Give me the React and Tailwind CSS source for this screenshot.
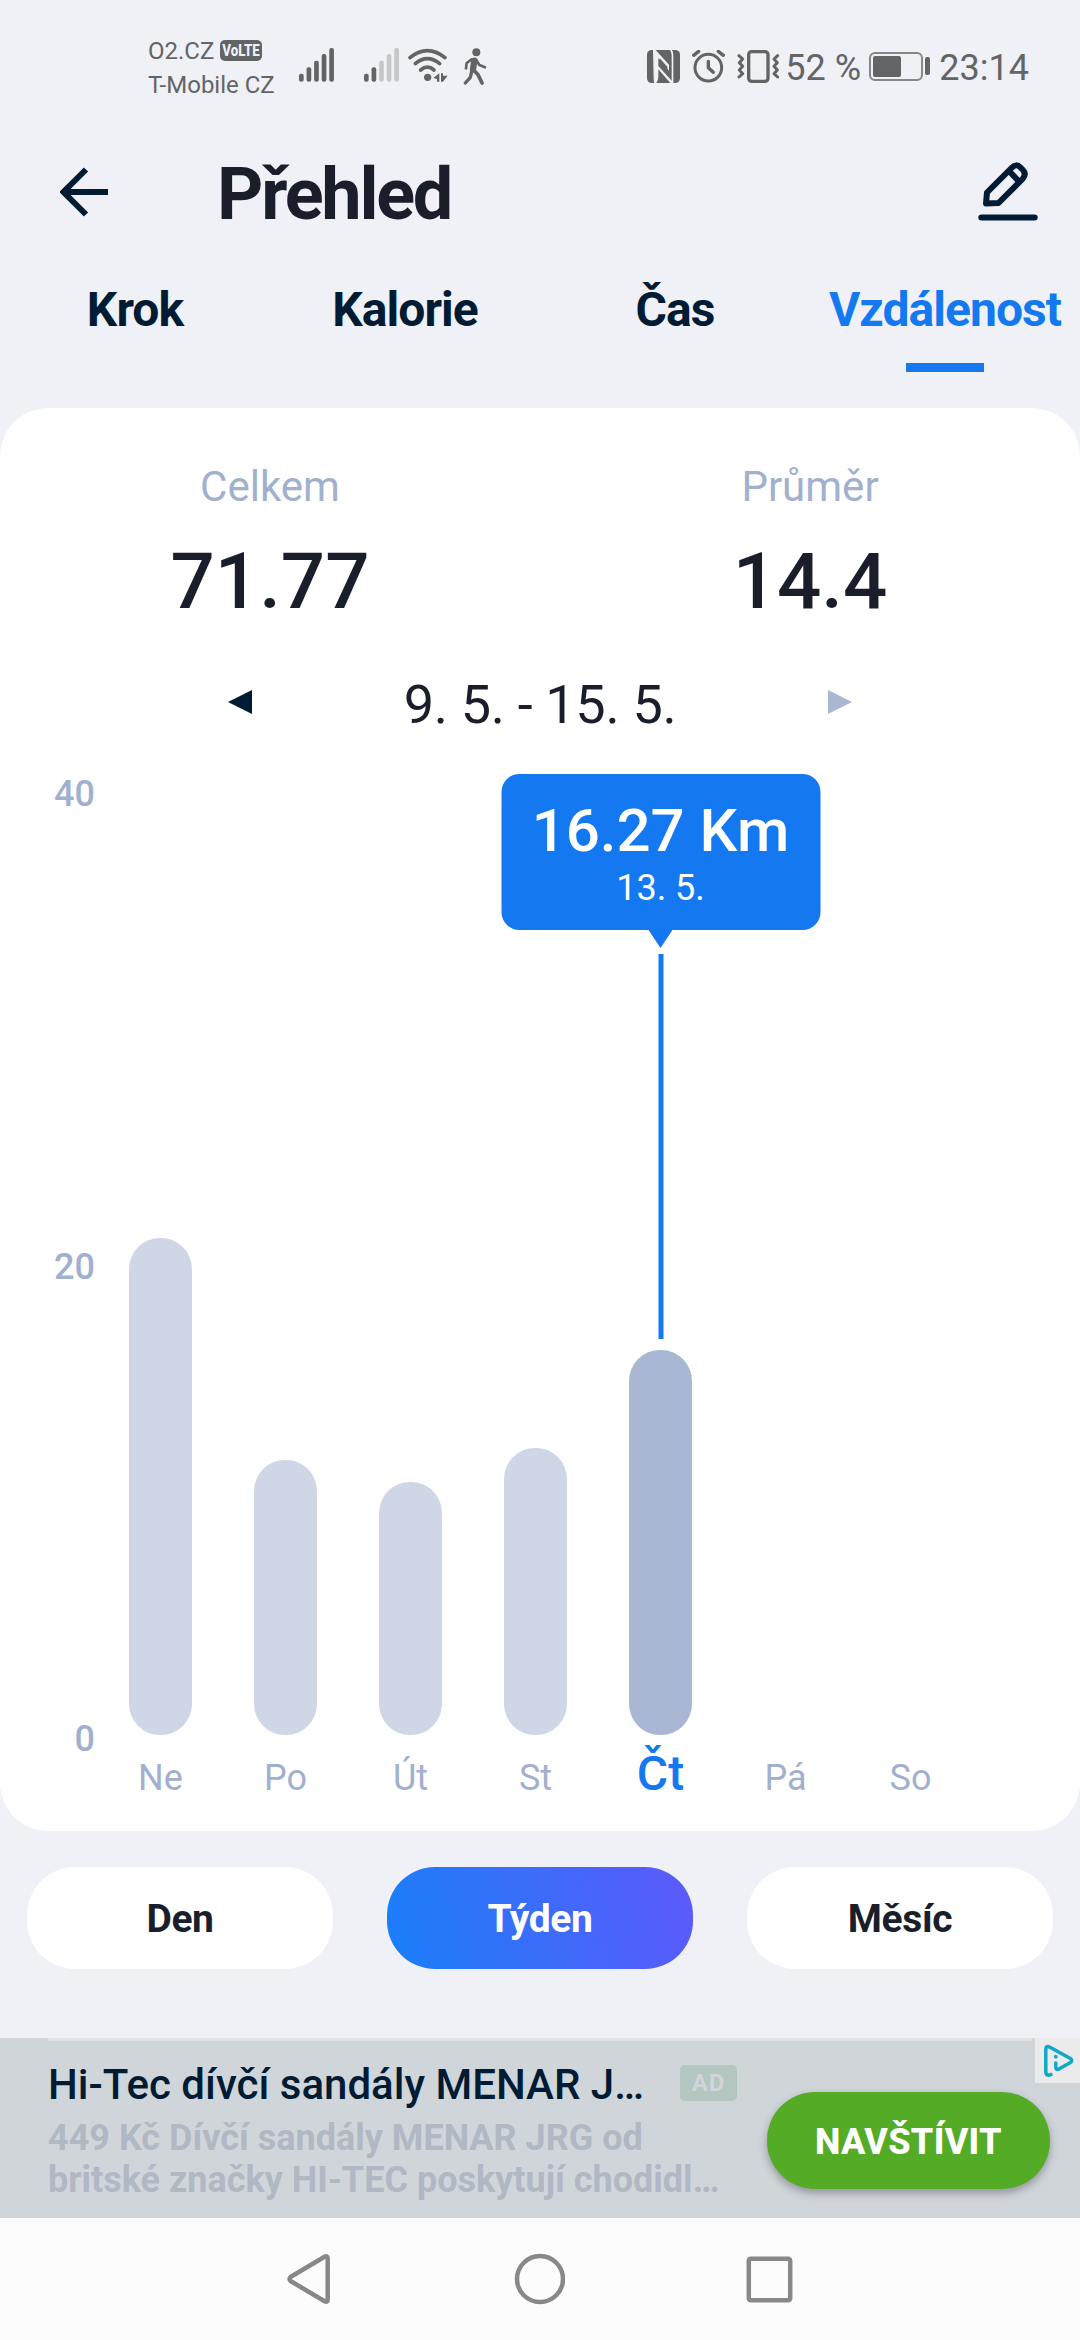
import { useState } from 'react';

const TABS = ['Krok', 'Kalorie', 'Čas', 'Vzdálenost'];

const PERIODS = ['Den', 'Týden', 'Měsíc'];

// Bar heights are in px, the scale is 472px per 20 km
const DAYS = [
  { label: 'Ne', height: 497 },
  { label: 'Po', height: 275 },
  { label: 'Út', height: 253 },
  { label: 'St', height: 287 },
  { label: 'Čt', height: 385, value: '16.27 Km', date: '13. 5.' },
  { label: 'Pá', height: 0 },
  { label: 'So', height: 0 },
];

const SignalIcon = ({ strength }) => {
  const tops = [163, 144, 124, 104, 86];
  return (
    <svg className="w-[35px] h-[34px]" viewBox="537 86 105 102">
      {tops.map((top, i) => (
        <rect
          key={top}
          x={537 + i * 22.7}
          y={top}
          width="14"
          height={187 - top}
          rx="6"
          fill={i < strength ? '#636466' : '#c6c7cb'}
        />
      ))}
    </svg>
  );
};

const WifiIcon = () => (
  <svg className="w-10 h-[34px]" viewBox="866 86 120 102" fill="none" stroke="#636466" strokeWidth="11" strokeLinecap="round">
    <path d="M872 115Q924 73 977 115" />
    <path d="M888 133Q924 103 961 133" />
    <path d="M904 152Q924 135 944 152" />
    <circle cx="925" cy="174" r="11" fill="#636466" stroke="none" />
    <path d="M942 176L960 162V187H953V179ZM965 162H971V169H985L971 187H965Z" fill="#636466" stroke="none" />
  </svg>
);

const WalkIcon = () => (
  <svg className="w-[24px] h-[37px]" viewBox="1030 82 72 111" fill="none" stroke="#636466" strokeLinecap="round" strokeLinejoin="round">
    <circle cx="1070" cy="95" r="12" fill="#636466" stroke="none" />
    <path d="M1064 120L1060 146" strokeWidth="19" />
    <path d="M1056 116L1041 127L1039 143" strokeWidth="8" />
    <path d="M1070 118L1079 133L1096 140" strokeWidth="8" />
    <path d="M1056 152L1052 170L1037 187" strokeWidth="10" />
    <path d="M1062 148L1075 162L1087 187" strokeWidth="11" />
  </svg>
);

const NfcIcon = () => (
  <svg className="w-[33px] h-[33px]" viewBox="78 90 99 99">
    <rect x="78" y="90" width="99" height="99" rx="14" fill="#636466" />
    <path
      d="M96 90L104 90L144 134V152L112 114V170Q112 182 106 189H100Q98 184 98 176ZM112 138L152 182V104Q151 96 147 90H153Q157 96 157 104V189H148L112 148Z"
      fill="#f0f1f6"
    />
    <path d="M116 124L139 150V140L116 115Z" fill="#636466" />
  </svg>
);

const AlarmIcon = () => (
  <svg className="w-[33px] h-[33px]" viewBox="213 90 99 99" fill="none" stroke="#636466" strokeWidth="9" strokeLinecap="round" strokeLinejoin="round">
    <circle cx="262" cy="143" r="40" />
    <path d="M262 124V143L277 157" strokeWidth="10" />
    <path d="M218 106L233 94M292 94L307 106" strokeWidth="10" />
  </svg>
);

const VibrateIcon = () => (
  <svg className="w-[43px] h-[33px]" viewBox="347 90 129 99" fill="none" stroke="#636466" strokeWidth="10" strokeLinejoin="round" strokeLinecap="round">
    <rect x="382" y="95" width="58" height="89" rx="9" />
    <path d="M353 107L364 117L354 128L364 139L354 150L364 161L353 171" strokeWidth="9" />
    <path d="M469 107L458 117L468 128L458 139L468 150L458 161L469 171" strokeWidth="9" />
  </svg>
);

const StatusBar = () => (
  <div className="h-[130px] flex items-start text-[#636466]">
    <div className="ml-[148px] mt-[34px] w-[151px] text-[24px] leading-[34px] whitespace-nowrap">
      <div className="flex items-center">
        <span>O2.CZ</span>
        <span className="ml-[6px] -mt-[2px] w-[42px] h-[21px] rounded-[5px] bg-[#636466] flex justify-center items-center">
          <span className="scale-x-[0.78] text-[17px] leading-[21px] font-extrabold text-[#f0f1f6]">VoLTE</span>
        </span>
      </div>
      <div>T-Mobile CZ</div>
    </div>
    <div className="mt-[48px] flex items-start">
      <SignalIcon strength={5} />
      <div className="ml-[30px] flex">
        <SignalIcon strength={2} />
      </div>
      <div className="ml-[9px] flex">
        <WifiIcon />
      </div>
      <div className="ml-[15px] flex">
        <WalkIcon />
      </div>
    </div>
    <div className="ml-auto mr-[51px] mt-[46px] h-10 flex items-center text-[36px]">
      <NfcIcon />
      <div className="ml-3 flex">
        <AlarmIcon />
      </div>
      <div className="ml-3 flex">
        <VibrateIcon />
      </div>
      <span className="ml-[5px] mt-[3px] w-[76px] leading-10 whitespace-nowrap">52 %</span>
      <div className="ml-[8px] w-[54px] h-[29px] rounded-[6px] border-2 border-[#85868a] p-[2px]">
        <div className="w-[28px] h-full rounded-[2px] bg-[#636466]" />
      </div>
      <div className="ml-[2px] w-[5px] h-[18px] rounded-[2px] bg-[#636466]" />
      <span className="ml-[9px] mt-[3px] leading-10">23:14</span>
    </div>
  </div>
);

const Header = () => (
  <header className="h-[128px] flex items-center pl-[60px] pr-[42px]">
    <svg className="w-12 h-[50px] -mt-1" viewBox="60 167 48 50" fill="none" stroke="#001b34" strokeWidth="6">
      <path d="M86 169.500L63.500 192L86 214.500M63.500 192H108" />
    </svg>
    <h1 className="ml-[109px] mt-[2px] text-[72px] leading-[84px] font-bold tracking-[-0.031em] text-[#1a1e2b]">Přehled</h1>
    <svg className="ml-auto -mt-1 w-[60px] h-[60px]" viewBox="978 162 60 60" fill="none" stroke="#001b34" strokeWidth="6" strokeLinejoin="round">
      <path d="M986 203.500L987 192.500L1011.500 168Q1016 163 1020.500 167.500L1022.500 169.500Q1027 174 1022.500 179L998.500 203Z" />
      <path d="M1009 171L1019 181.500" />
      <path d="M981.300 217.500H1034.700" strokeLinecap="round" />
    </svg>
  </header>
);

const Tooltip = ({ value, date, lineHeight }) => (
  <div className="absolute bottom-full left-1/2 -translate-x-1/2 mb-[11px] flex flex-col items-center">
    <div className="w-[319px] h-[156px] rounded-[18px] bg-[#1479f0] pt-[22px] text-center text-white whitespace-nowrap">
      <div className="text-[60px] leading-[70px] font-medium">{value}</div>
      <div className="text-[36px] leading-[44px]">{date}</div>
    </div>
    <svg className="w-6 h-[18px]" viewBox="0 0 24 18">
      <path d="M0 0H24L12 18Z" fill="#1479f0" />
    </svg>
    <div className="mt-[6px] w-[5px] bg-[#1479f0]" style={{ height: lineHeight }} />
  </div>
);

const Chart = () => {
  const selected = 4;

  return (
    <div className="mt-[39px] flex">
      {/* Y axis */}
      <div className="w-[95px] h-[981px] flex flex-col justify-between text-right text-[36px] leading-[36px] font-medium text-[#a1b0cf]">
        <span>40</span>
        <span>20</span>
        <span>0</span>
      </div>

      {/* Bars */}
      <div className="ml-[3px]">
        <div className="h-[959px] flex items-end">
          {DAYS.map((day, i) => (
            <div key={day.label} className="w-[125px] flex justify-center">
              <div
                className={`relative w-[63px] rounded-[31px] ${i === selected ? 'bg-[#a9b6d4]' : 'bg-[#cfd6e6]'}`}
                style={{ height: day.height }}
              >
                {i === selected && <Tooltip value={day.value} date={day.date} lineHeight={385} />}
              </div>
            </div>
          ))}
        </div>
        <div className="mt-[11px] flex items-baseline">
          {DAYS.map((day, i) => (
            <span
              key={day.label}
              className={`w-[125px] text-center ${
                i === selected
                  ? 'text-[48px] leading-[56px] font-medium text-[#1479f0]'
                  : 'text-[36px] leading-[40px] text-[#a1b0cf]'
              }`}
            >
              {day.label}
            </span>
          ))}
        </div>
      </div>
    </div>
  );
};

const AdBanner = () => (
  <div className="relative h-[180px] flex bg-[#d0d5da]">
    <div className="absolute top-0 left-12 w-[984px] h-[3px] bg-[#dfe3e8]" />
    <div className="w-[767px] pl-12 pt-[22px] whitespace-nowrap">
      <div className="flex items-center">
        <p className="w-[632px] text-[42px] leading-[50px] font-medium text-[#001b34]">Hi-Tec dívčí sandály MENAR J…</p>
        <span className="-mt-[4px] w-[57px] h-9 rounded-[5px] bg-[#b3c7c0] text-center text-[24px] leading-9 font-bold tracking-[0.04em] text-[#d0d5da]">
          AD
        </span>
      </div>
      <p className="mt-[7px] text-[36px] leading-[42px] font-bold text-[#b0b8c3]">
        449 Kč Dívčí sandály MENAR JRG od
        <br />
        britské značky HI-TEC poskytují chodidl…
      </p>
    </div>
    <button className="mt-[54px] w-[283px] h-[97px] rounded-[48px] bg-[#54ab26] pt-[2px] text-[36px] leading-[42px] font-extrabold tracking-[0.008em] text-white shadow-[0_4px_8px_rgba(0,0,0,0.3)]">
      NAVŠTÍVIT
    </button>
    <div className="absolute top-0 right-0 w-[45px] h-[45px] bg-[#ebebeb]">
      <svg className="w-[45px] h-[45px]" viewBox="0 0 45 45" fill="none" stroke="#10a8c6" strokeWidth="3.500" strokeLinecap="round" strokeLinejoin="round">
        <path d="M16 36.500L13.500 37.300Q10.800 37 10.800 34V11Q11 7.500 14 8.800L35.500 20.500Q38 22.500 35.500 24.500L23 31.500Q20.800 31.500 20.800 29V25" />
        <circle cx="20.800" cy="18.700" r="1.900" fill="#10a8c6" stroke="none" />
      </svg>
    </div>
  </div>
);

const NavBar = () => (
  <nav className="h-[122px] flex items-center justify-between pl-[286px] pr-[287px] bg-[#fcfcfc]">
    <svg className="w-[45px] h-[52px]" viewBox="0 0 45 52" fill="none" stroke="#888" strokeWidth="4.500" strokeLinejoin="round">
      <path d="M39 3.500Q41.700 2.500 41.700 5.500V46.500Q41.700 49.500 39 48.500L4.500 28Q2.500 26 4.500 24Z" />
    </svg>
    <svg className="w-[52px] h-[52px]" viewBox="0 0 52 52" fill="none" stroke="#888" strokeWidth="4.500">
      <circle cx="27" cy="26" r="23" />
    </svg>
    <svg className="w-[47px] h-[47px]" viewBox="0 0 47 47" fill="none" stroke="#888" strokeWidth="4.500">
      <rect x="2.800" y="2.800" width="41.400" height="41.400" rx="2" />
    </svg>
  </nav>
);

const App = () => {
  const [tab, setTab] = useState('Vzdálenost');
  const [period, setPeriod] = useState('Týden');

  return (
    <div className="w-[1080px] h-[2340px] flex flex-col overflow-hidden bg-[#f0f1f6] font-['Roboto',sans-serif]">
      <StatusBar />
      <Header />

      {/* Tabs */}
      <div className="h-[150px] grid grid-cols-4 pt-[22px]">
        {TABS.map((name) => (
          <button
            key={name}
            onClick={() => setTab(name)}
            className={`flex flex-col items-center text-[48px] leading-[60px] font-bold tracking-[-0.02em] ${
              tab === name ? 'text-[#1479f0]' : 'text-[#001b34]'
            }`}
          >
            {name}
            {tab === name && <span className="mt-[23px] w-[78px] h-[9px] bg-[#1479f0]" />}
          </button>
        ))}
      </div>

      {/* Summary card */}
      <main className="h-[1423px] rounded-[48px] bg-white pt-[54px]">
        <div className="grid grid-cols-2 text-center">
          <div>
            <p className="text-[42px] leading-[50px] text-[#a1b0cf]">Celkem</p>
            <p className="mt-6 text-[78px] leading-[92px] font-medium text-[#1a1e2b]">71.77</p>
          </div>
          <div>
            <p className="text-[42px] leading-[50px] text-[#a1b0cf]">Průměr</p>
            <p className="mt-6 text-[78px] leading-[92px] font-medium text-[#1a1e2b]">14.4</p>
          </div>
        </div>

        {/* Week selector */}
        <div className="mt-[45px] h-16 flex items-center justify-between px-[228px]">
          <svg className="w-6 h-6 -mt-[6px]" viewBox="0 0 24 24">
            <path d="M24 0V24L0 12Z" fill="#001b34" />
          </svg>
          <span className="text-[54px] leading-[64px] tracking-[-0.006em] text-[#1a1e2b]">9. 5. - 15. 5.</span>
          <svg className="w-6 h-6 -mt-[6px]" viewBox="0 0 24 24">
            <path d="M0 0V24L24 12Z" fill="#a9b6d4" />
          </svg>
        </div>

        <Chart />
      </main>

      {/* Period switch */}
      <div className="mt-9 h-[102px] px-[27px] grid grid-cols-3 gap-[54px]">
        {PERIODS.map((name) => (
          <button
            key={name}
            onClick={() => setPeriod(name)}
            className={`rounded-[48px] pt-[2px] text-[39px] leading-[46px] font-bold tracking-[-0.01em] ${
              period === name
                ? 'bg-[linear-gradient(75deg,#197ffa,#5e59fa)] text-white'
                : 'bg-white text-[#1a1e2b]'
            }`}
          >
            {name}
          </button>
        ))}
      </div>

      <div className="mt-auto">
        <AdBanner />
        <NavBar />
      </div>
    </div>
  );
};

export default App;
